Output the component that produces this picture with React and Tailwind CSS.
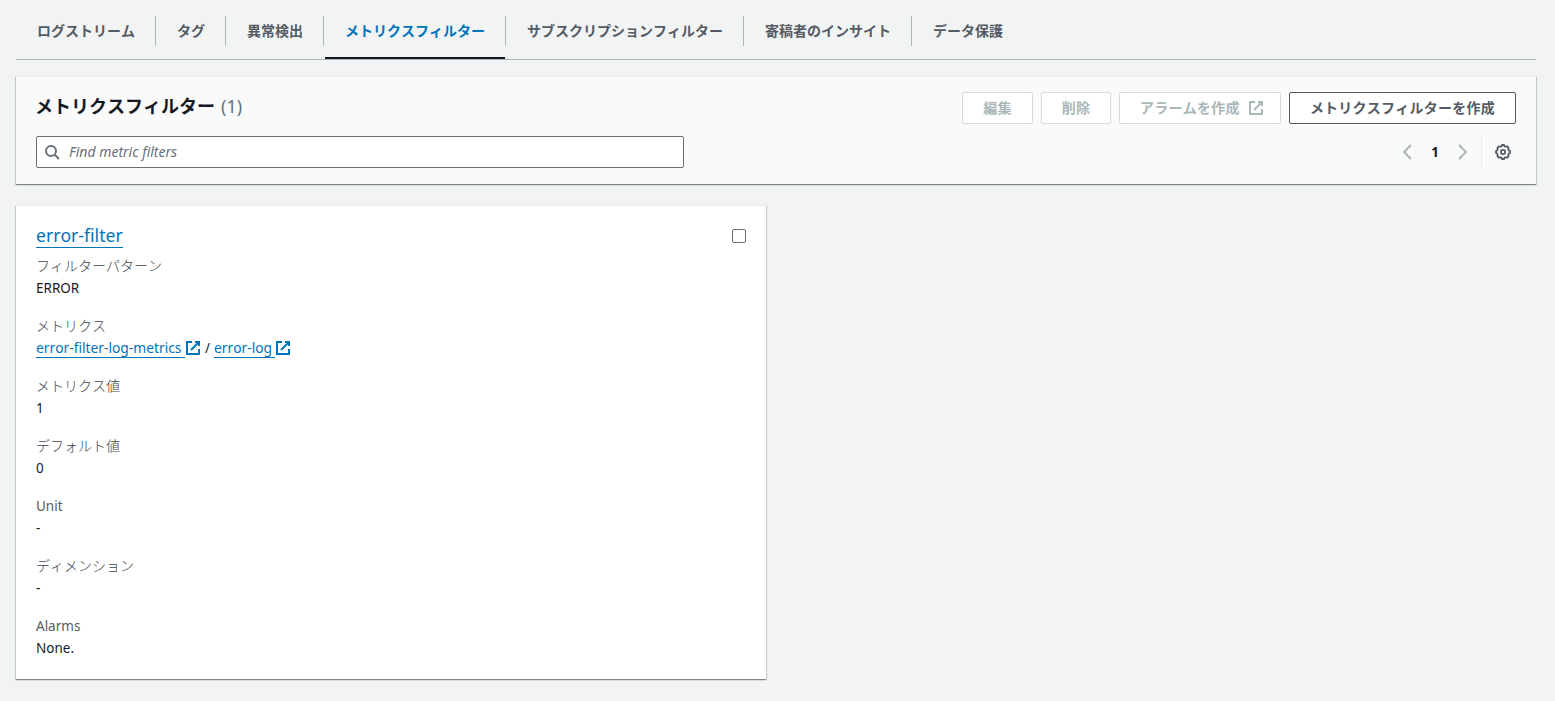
import React from "react";

const tabs = [
  "ログストリーム",
  "タグ",
  "異常検出",
  "メトリクスフィルター",
  "サブスクリプションフィルター",
  "寄稿者のインサイト",
  "データ保護",
];

const panelShadow =
  "shadow-[0_1px_1px_0_rgba(0,28,36,0.3),1px_1px_1px_0_rgba(0,28,36,0.15),-1px_1px_1px_0_rgba(0,28,36,0.15)]";

function ExternalIcon({ className = "" }) {
  return (
    <svg viewBox="0 0 16 16" width="16" height="16" fill="none" stroke="currentColor" strokeWidth="2" className={className}>
      <path d="M10 2h4v4" />
      <path d="M6 10l8-8" />
      <path d="M14 9.05V14H2V2h5" />
    </svg>
  );
}

function SearchIcon() {
  return (
    <svg viewBox="0 0 16 16" width="16" height="16" fill="none" stroke="#687078" strokeWidth="2">
      <circle cx="7" cy="7" r="5" />
      <path d="M15 15l-4.5-4.5" />
    </svg>
  );
}

function GearIcon() {
  return (
    <svg viewBox="0 0 16 16" width="16" height="16" fill="none" stroke="#545b64" strokeWidth="1.8" strokeLinejoin="round">
      <path d="M15 7V9L13.7 9.6L13.3 10.7L13.6 12.2L12.2 13.6L10.7 13.3L9.6 13.7L9 15H7L6.4 13.7L5.3 13.3L3.8 13.6L2.4 12.2L2.7 10.7L2.3 9.6L1 9V7L2.3 6.4L2.7 5.3L2.4 3.8L3.8 2.4L5.3 2.7L6.4 2.3L7 1H9L9.6 2.3L10.7 2.7L12.2 2.4L13.6 3.8L13.3 5.3L13.7 6.4Z" />
      <circle cx="8" cy="8" r="2.1" />
    </svg>
  );
}

function Chevron({ right = false }) {
  return (
    <svg viewBox="0 0 16 16" width="16" height="16" fill="none" stroke="#aab7b8" strokeWidth="2">
      <path d={right ? "M4 1l7 7-7 7" : "M12 1L5 8l7 7"} />
    </svg>
  );
}

function Button({ children, className, disabled = false }) {
  return (
    <button
      disabled={disabled}
      className={`flex h-8 items-center rounded-[2px] border bg-white text-sm leading-[22px] font-bold tracking-[0.25px] whitespace-nowrap ${
        disabled ? "border-[#d5dbdb] text-[#aab7b8]" : "border-[#545b64] text-[#545b64]"
      } ${className}`}
    >
      {children}
    </button>
  );
}

function Field({ label, latin = false, children }) {
  return (
    <div>
      <dt className={`h-[22px] leading-[22px] ${latin ? "text-[13.5px] text-[#545b64]" : "text-sm font-light text-[#3c434b]"}`}>{label}</dt>
      <dd className="flex h-[22px] items-center text-[13.5px] leading-[22px]">{children}</dd>
    </div>
  );
}

function ExternalLink({ children, className }) {
  return (
    <a className="flex items-center text-[#0073bb]">
      <span className={`h-5 border-b border-[#0073bb] text-[13.8px] leading-[20px] whitespace-nowrap ${className}`}>{children}</span>
      <ExternalIcon />
    </a>
  );
}

export default function App() {
  return (
    <div className="min-h-[701px] bg-[#f2f3f3] pr-[19px] pl-4 font-['Noto_Sans','Noto_Sans_CJK_JP',sans-serif] text-[#16191f] [font-kerning:none]">
      <nav className="flex h-[60px] border-b border-[#aab7b8]">
        {tabs.map((tab, i) => {
          const active = i === 3;
          return (
            <div key={tab} className="flex h-[59px] flex-col">
              <div
                className={`mt-4 flex h-[30px] items-center pr-5 pl-[21px] text-sm leading-[22px] font-bold whitespace-nowrap ${
                  i < tabs.length - 1 ? "border-r border-[#aab7b8]" : ""
                } ${active ? "text-[#0073bb]" : "text-[#545b64]"}`}
              >
                {tab}
              </div>
              {active && <div className="mt-[11px] mr-px ml-px h-0.5 bg-[#16191f]" />}
            </div>
          );
        })}
      </nav>

      <section className={`mt-4 h-[108px] border-t border-[#eaeded] bg-[#fafafa] px-5 pt-[15px] ${panelShadow}`}>
        <div className="flex h-8 justify-between">
          <h2 className="-ml-px flex h-7 items-center text-lg leading-[28px] font-bold">
            メトリクスフィルター
            <span className="ml-1.5 text-[18px] font-normal text-[#687078]">(1)</span>
          </h2>
          <div className="flex gap-2">
            <Button disabled className="w-[71px] justify-center">編集</Button>
            <Button disabled className="w-[70px] justify-center">削除</Button>
            <Button disabled className="w-[162px] justify-between pr-4 pl-5">
              アラームを作成
              <ExternalIcon />
            </Button>
            <Button className="w-[227px] justify-center">メトリクスフィルターを作成</Button>
          </div>
        </div>
        <div className="mt-3 flex h-8 justify-between">
          <div className="flex w-[648px] items-center gap-[9px] rounded-[2px] border border-[#687078] bg-white pl-[7px]">
            <SearchIcon />
            <span className="text-[14px] leading-[22px] text-[#687078] italic">Find metric filters</span>
          </div>
          <div className="flex items-center">
            <Chevron />
            <span className="w-10 pt-px text-center text-[13.3px] font-bold">1</span>
            <Chevron right />
            <div className="ml-2.5 flex h-8 items-center border-l border-[#eaeded] pr-[5px] pl-[13px]">
              <GearIcon />
            </div>
          </div>
        </div>
      </section>

      <article className={`mt-[21px] h-[474px] w-[750px] border-t border-[#eaeded] bg-white px-5 pt-[19px] ${panelShadow}`}>
        <div className="flex h-[22px] items-start justify-between">
          <a className="h-[23px] border-b border-[#0073bb] text-[17.6px] leading-[20px] whitespace-nowrap text-[#0073bb]">error-filter</a>
          <span className="mt-1 h-3.5 w-3.5 rounded-[2px] border border-[#687078] bg-white" />
        </div>
        <dl className="mt-2 flex flex-col gap-4">
          <Field label="フィルターパターン">ERROR</Field>
          <Field label="メトリクス">
            <ExternalLink className="w-[149px]">error-filter-log-metrics</ExternalLink>
            <span className="w-[13px] text-center">/</span>
            <ExternalLink className="w-[61px]">error-log</ExternalLink>
          </Field>
          <Field label="メトリクス値">1</Field>
          <Field label="デフォルト値">0</Field>
          <Field label="Unit" latin>-</Field>
          <Field label="ディメンション">-</Field>
          <Field label="Alarms" latin>None.</Field>
        </dl>
      </article>
    </div>
  );
}
